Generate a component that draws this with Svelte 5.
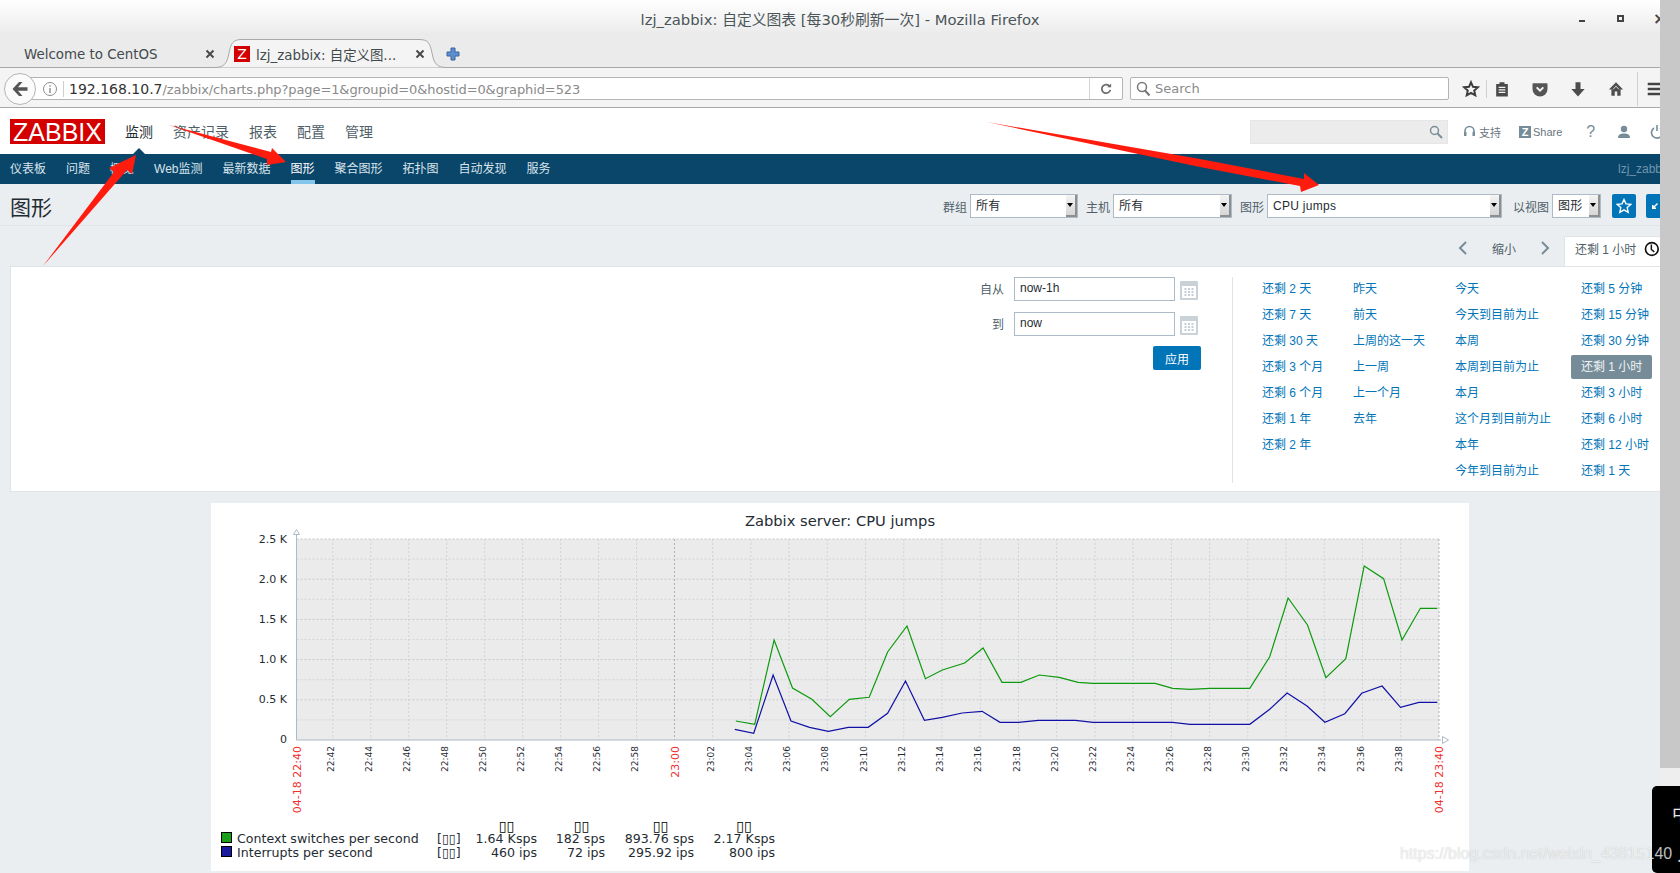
<script>
	const topNav = ['监测', '资产记录', '报表', '配置', '管理']
	const subNav = ['仪表板', '问题', '概览', 'Web监测', '最新数据', '图形', '聚合图形', '拓扑图', '自动发现', '服务']

	const quick = [
		{ w: 91, items: ['还剩 2 天', '还剩 7 天', '还剩 30 天', '还剩 3 个月', '还剩 6 个月', '还剩 1 年', '还剩 2 年'] },
		{ w: 102, items: ['昨天', '前天', '上周的这一天', '上一周', '上一个月', '去年'] },
		{ w: 126, items: ['今天', '今天到目前为止', '本周', '本周到目前为止', '本月', '这个月到目前为止', '本年', '今年到目前为止'] },
		{ w: 81, items: ['还剩 5 分钟', '还剩 15 分钟', '还剩 30 分钟', '还剩 1 小时', '还剩 3 小时', '还剩 6 小时', '还剩 12 小时', '还剩 1 天'] }
	]

	// chart geometry, in page pixels
	const left = 296.5
	const right = 1439
	const top = 539
	const bottom = 740

	// the grid is not quite even in the reference: first slot is short, then 22:42-23:00 and 23:02-23:40 differ a little
	const tickX = (i) => {
		if (i === 0) return left
		if (i <= 10) return 332.8 + (i - 1) * 37.97
		return 712.6 + (i - 11) * 38.23
	}

	const ticks = Array.from({ length: 31 }, (_, i) => {
		const total = 22 * 60 + 40 + i * 2
		const hh = Math.floor(total / 60)
		const mm = String(total % 60).padStart(2, '0')
		const time = hh + ':' + mm
		const edge = i === 0 || i === 30
		return {
			x: tickX(i),
			label: edge ? '04-18 ' + time : time,
			red: edge || i === 10
		}
	})
	const hLines = Array.from({ length: 10 }, (_, i) => ({ y: top + i * 20.1, major: i % 2 === 0 }))
	const yLabels = ['2.5 K', '2.0 K', '1.5 K', '1.0 K', '0.5 K', '0']

	const green = [[72,663],[110,673],[149,420],[186,564],[225,598],[262,650],[300,598],[340,592],[377,456],[416,378],[453,536],[487,510],[532,489],[569,444],[607,547],[645,547],[682,525],[722,532],[760,547],[790,550],[915,550],[950,565],[985,568],[1025,565],[1105,565],[1145,470],[1182,294],[1221,375],[1258,533],[1298,476],[1335,198],[1374,236],[1411,420],[1448,325],[1482,325]]
	const blue = [[70,688],[108,700],[147,525],[183,663],[220,682],[258,694],[298,682],[338,682],[377,640],[413,543],[451,661],[487,652],[527,639],[567,634],[603,667],[640,667],[680,661],[755,661],[790,667],[950,667],[985,673],[1105,673],[1145,628],[1180,579],[1220,618],[1256,667],[1296,641],[1330,580],[1371,558],[1408,622],[1445,607],[1482,607]]
	const toLine = (pts) => pts.map(([x, y]) => (700 + x / 2.01).toFixed(1) + ',' + (500 + y / 3).toFixed(1)).join(' ')

	const legend = [
		{ name: 'Context switches per second', color: '#1a9f1a', y: 843, vals: ['1.64 Ksps', '182 sps', '893.76 sps', '2.17 Ksps'] },
		{ name: 'Interrupts per second', color: '#1a1a9f', y: 857, vals: ['460 ips', '72 ips', '295.92 ips', '800 ips'] }
	]
	const valX = [537, 605, 694, 775]
	const headX = [506.5, 581.5, 660.5, 744]
</script>

<div class="screen">
	<div class="main">
		<div class="titlebar">
			<span class="title">lzj_zabbix: 自定义图表 [每30秒刷新一次] - Mozilla Firefox</span>
			<span class="win min"></span>
			<span class="win max"></span>
			<span class="win close">×</span>
		</div>

		<div class="tabstrip">
			<div class="tab">
				<span class="tab-text">Welcome to CentOS</span>
				<svg class="tab-x" width="10" height="10" viewBox="0 0 10 10"><path d="M1.500 1.500l7 7M8.500 1.500l-7 7" stroke="#4a4a4a" stroke-width="2"/></svg>
			</div>
			<div class="tab active">
				<svg class="tab-shape" width="233" height="29" viewBox="0 0 233 29"><path d="M0 28.500C10 28.500 13 25 15 14 17 4 19 .5 28 .5H205C214 .5 216 4 218 14 220 25 223 28.500 233 28.500" fill="#f4f4f4" stroke="#a8a8a8"/></svg>
				<span class="favicon">Z</span>
				<span class="tab-text">lzj_zabbix: 自定义图...</span>
				<svg class="tab-x" width="10" height="10" viewBox="0 0 10 10"><path d="M1.500 1.500l7 7M8.500 1.500l-7 7" stroke="#4a4a4a" stroke-width="2"/></svg>
			</div>
			<svg class="plus" width="14" height="14" viewBox="0 0 14 14"><path d="M5 1h4v4h4v4H9v4H5V9H1V5h4z" fill="#5b8fd0" stroke="#3c659c"/></svg>
		</div>

		<div class="toolbar">
			<div class="back">
				<svg width="18" height="16" viewBox="0 0 18 16"><path d="M8 1L1.500 8 8 15h3.500L7 9.800h9.500V6.200H7L11.500 1z" fill="#555"/></svg>
			</div>
			<div class="urlbar">
				<svg class="info" width="16" height="16" viewBox="0 0 16 16"><circle cx="8" cy="8" r="6.500" fill="none" stroke="#8c8c8c"/><path d="M8 7v5M8 4.200v1.600" stroke="#8c8c8c" stroke-width="1.400"/></svg>
				<span class="url"><b>192.168.10.7</b>/zabbix/charts.php?page=1&amp;groupid=0&amp;hostid=0&amp;graphid=523</span>
				<span class="reload">
					<svg width="12" height="12" viewBox="0 0 14 14"><path d="M11.500 4.500A5 5 0 1 0 12 8" fill="none" stroke="#6a6a6a" stroke-width="2"/><path d="M8.500 5h4.500V.5z" fill="#6a6a6a"/></svg>
				</span>
			</div>
			<div class="searchbar">
				<svg width="15" height="16" viewBox="0 0 15 16"><circle cx="6" cy="6" r="4.500" fill="none" stroke="#777" stroke-width="1.500"/><path d="M9 9.500l4.500 5" stroke="#777" stroke-width="2"/></svg>
				<span>Search</span>
			</div>
			<svg class="ic star" width="20" height="20" viewBox="-2 -2 24 24"><path d="M10 2l2.400 5.400 5.800.6-4.300 3.900 1.200 5.700L10 14.700l-5.100 2.900 1.200-5.700L1.800 8l5.800-.6z" fill="none" stroke="#3c3c3c" stroke-width="2.400"/></svg>
			<span class="tb-sep"></span>
			<svg class="ic clip" width="20" height="20" viewBox="-2 -2 24 24"><path d="M3 4h4V2h6v2h4v15H3z" fill="#4a4a4a"/><path d="M6 8h8M6 11h8M6 14h8" stroke="#f4f4f4" stroke-width="1.400"/></svg>
			<svg class="ic" width="20" height="20" viewBox="-2 -2 24 24"><path d="M2 3h16a1 1 0 0 1 1 1v6a9 9 0 0 1-18 0V4a1 1 0 0 1 1-1z" fill="#555"/><path d="M6 8l4 4 4-4" fill="none" stroke="#f4f4f4" stroke-width="2.400"/></svg>
			<svg class="ic" width="20" height="20" viewBox="-2 -2 24 24"><path d="M7 2h6v8h5l-8 9-8-9h5z" fill="#4d4d4d"/></svg>
			<svg class="ic" width="20" height="20" viewBox="-2 -2 24 24"><path d="M10 2L1.500 10.500h3V18h4v-5h3v5h4v-7.500h3z" fill="#4d4d4d"/><path d="M6.500 10.500L10 6.500l3.500 4" fill="none" stroke="#f4f4f4"/></svg>
			<span class="tb-sep wide"></span>
			<svg class="ic menu" width="20" height="20" viewBox="-1 -1 22 22"><path d="M2 4.500h16M2 10h16M2 15.500h16" stroke="#444" stroke-width="2.600"/></svg>
		</div>

		<header class="zbx-top">
			<div class="logo">ZABBIX</div>
			<nav class="top-nav">
				{#each topNav as item, i}
					<span class:on={i === 0}>{item}</span>
				{/each}
			</nav>
			<div class="top-tools">
				<div class="top-search">
					<svg width="14" height="14" viewBox="0 0 14 14"><circle cx="5.500" cy="5.500" r="4" fill="none" stroke="#7b8d99" stroke-width="1.500"/><path d="M8.500 8.500l4.500 4.500" stroke="#7b8d99" stroke-width="2"/></svg>
				</div>
				<span class="tool support">
					<svg width="13" height="14" viewBox="0 0 13 14"><path d="M2 9V6a4.500 4.500 0 0 1 9 0v3" fill="none" stroke="#768d99" stroke-width="1.600"/><rect x="1" y="7" width="2.500" height="4" fill="#768d99"/><rect x="9.500" y="7" width="2.500" height="4" fill="#768d99"/></svg>
					支持
				</span>
				<span class="tool share"><i>Z</i>Share</span>
				<span class="tool help">?</span>
				<svg class="tool person" width="14" height="14" viewBox="0 0 14 14"><circle cx="7" cy="4" r="3.200" fill="#768d99"/><path d="M1 13c0-3.500 2.500-4.500 6-4.500s6 1 6 4.500z" fill="#768d99"/></svg>
				<svg class="tool power" width="14" height="14" viewBox="0 0 14 14"><path d="M4 3a5.500 5.500 0 1 0 6 0" fill="none" stroke="#768d99" stroke-width="1.600"/><path d="M7 0v6" stroke="#768d99" stroke-width="1.600"/></svg>
			</div>
		</header>

		<nav class="sub-nav">
			{#each subNav as item}
				<span class:on={item === '图形'}>{item}</span>
			{/each}
			<span class="user">lzj_zabb</span>
		</nav>

		<div class="page">
			<div class="head">
				<h1>图形</h1>
				<div class="filters">
					<label>群组</label><div class="sel w108">所有<i></i></div>
					<label class="tight">主机</label><div class="sel w119">所有<i></i></div>
					<label class="tight">图形</label><div class="sel w235">CPU jumps<i></i></div>
					<label>以视图</label><div class="sel w49">图形<i></i></div>
					<button class="icon-btn">
						<svg width="16" height="16" viewBox="0 0 16 16"><path d="M8 1.500l2 4.400 4.700.5-3.500 3.200 1 4.700L8 11.900 3.800 14.300l1-4.700L1.300 6.400 6 5.900z" fill="none" stroke="#fff" stroke-width="1.400"/></svg>
					</button>
					<button class="icon-btn last">
						<svg width="8" height="8" viewBox="0 0 8 8"><path d="M1 7V3h1.500v1.500L6 1l1 1-3.500 3.500H5V7z" fill="#fff"/></svg>
					</button>
				</div>
			</div>

			<div class="time-bar">
				<svg width="10" height="16" viewBox="0 0 10 16"><path d="M8 2L2 8l6 6" fill="none" stroke="#768d99" stroke-width="2"/></svg>
				<span class="zoom-out">缩小</span>
				<svg width="10" height="16" viewBox="0 0 10 16"><path d="M2 2l6 6-6 6" fill="none" stroke="#768d99" stroke-width="2"/></svg>
				<div class="time-tab">
					还剩 1 小时
					<svg width="16" height="16" viewBox="0 0 16 16"><circle cx="8" cy="8" r="6.500" fill="none" stroke="#111" stroke-width="1.700"/><path d="M7.500 3.500V8.500l3 2.500" fill="none" stroke="#111" stroke-width="1.500"/></svg>
				</div>
			</div>

			<section class="panel">
				<div class="range-form">
					<div class="row">
						<span>自从</span><div class="txt">now-1h</div>
						<svg width="18" height="19" viewBox="0 0 18 19"><rect width="18" height="19" rx="1" fill="#c9d2d8"/><rect x="2" y="5" width="14" height="12" fill="#fff"/><path d="M4.500 8h2M8 8h2M11.500 8h2M4.500 11h2M8 11h2M11.500 11h2M4.500 14h2M8 14h2M11.500 14h2" stroke="#b2bec6" stroke-width="1.500"/></svg>
					</div>
					<div class="row">
						<span>到</span><div class="txt">now</div>
						<svg width="18" height="19" viewBox="0 0 18 19"><rect width="18" height="19" rx="1" fill="#c9d2d8"/><rect x="2" y="5" width="14" height="12" fill="#fff"/><path d="M4.500 8h2M8 8h2M11.500 8h2M4.500 11h2M8 11h2M11.500 11h2M4.500 14h2M8 14h2M11.500 14h2" stroke="#b2bec6" stroke-width="1.500"/></svg>
					</div>
					<button class="apply">应用</button>
				</div>
				<div class="quick">
					{#each quick as col}
						<div class="quick-col" style="width:{col.w}px">
							{#each col.items as item}
								<span class:sel-range={item === '还剩 1 小时'}>{item}</span>
							{/each}
						</div>
					{/each}
				</div>
			</section>

			<div class="graph">
				<svg width="1258" height="368" viewBox="211 503 1258 368">
					<rect x={left} y={top} width={right - left} height={bottom - top} fill="#ebebeb"/>
					{#each hLines as l}
						<line x1={left} x2={right} y1={l.y} y2={l.y} stroke={l.major ? '#c4c9cc' : '#d2d6d8'} stroke-dasharray="2 2"/>
					{/each}
					{#each ticks as t}
						<line x1={t.x} x2={t.x} y1={top} y2={bottom} stroke={t.red ? '#a9b1b6' : '#cdd4d8'} stroke-dasharray="2 2"/>
						<text
							class:tick={!t.red}
							class:tick-red={t.red}
							text-anchor="end"
							transform="translate({t.x + (t.red ? 4 : 1.2)} 746) rotate(-90)">{t.label}</text>
					{/each}
					<polyline points={toLine(green)} fill="none" stroke="#0d9a0d" stroke-width="1.200"/>
					<polyline points={toLine(blue)} fill="none" stroke="#1010a6" stroke-width="1.200"/>

					<line x1={left} x2={left} y1="535" y2={bottom} stroke="#acbbc7"/>
					<line x1={left} x2="1441" y1={bottom} y2={bottom} stroke="#acbbc7" stroke-width="1.200"/>
					<path d="M296.500 529.500l3 5h-6z" fill="#fff" stroke="#acbbc7"/>
					<path d="M1448.500 740l-6-3.500v7z" fill="#fff" stroke="#acbbc7"/>

					{#each yLabels as label, i}
						<text class="ylabel" x="287" y={543 + i * 40} text-anchor="end">{label}</text>
					{/each}

					<text class="gtitle" x="840" y="526" text-anchor="middle">Zabbix server: CPU jumps</text>

					{#each headX as x}
						<text class="legend-head" {x} y="831" text-anchor="middle">▯▯</text>
					{/each}
					{#each legend as row}
						<rect x="221.500" y={row.y - 10.500} width="10" height="10" fill={row.color} stroke="#000"/>
						<text class="legend" x="237" y={row.y}>{row.name}</text>
						<text class="legend" x="437" y={row.y}>[▯▯]</text>
						{#each row.vals as v, i}
							<text class="legend" x={valX[i]} y={row.y} text-anchor="end">{v}</text>
						{/each}
					{/each}
				</svg>
			</div>
		</div>
	</div>

	<div class="scrollbar"><div class="thumb"></div></div>

	<!-- hand-drawn red arrows on top of the screenshot -->
	<svg class="arrows" width="1680" height="873" viewBox="0 0 1680 873">
		<path d="M43 266L114 172 109 168 136 155 132 174 127 170z" fill="#ff1c0e"/>
		<path d="M169 125L271 152 272 148 286 162 267 165 267 159z" fill="#ff1c0e"/>
		<path d="M987 122L1200 159 1304 179 1304 173 1319 185 1301 192 1300 186 1200 167z" fill="#ff1c0e"/>
	</svg>

	<div class="ime"><span>中</span><span class="second">丿</span></div>
	<div class="watermark">https://blog.csdn.net/weixin_43815140</div>
</div>

<style>
	:global(body) {
		margin: 0;
		background: #ebeef1;
	}

	.screen {
		position: relative;
		display: flex;
		width: 1680px;
		height: 873px;
		overflow: hidden;
		font-family: "Liberation Sans", "Noto Sans CJK SC", sans-serif;
		font-size: 12px;
		color: #1f2c33;
	}

	.main {
		width: 1660px;
		overflow: hidden;
		display: flex;
		flex-direction: column;
	}

	/* firefox chrome */
	.titlebar {
		position: relative;
		flex: none;
		height: 34px;
		box-sizing: border-box;
		padding: 2px 0 0 20px;
		display: flex;
		align-items: center;
		justify-content: center;
		background: linear-gradient(#fff, #ebebeb);
		font-family: "DejaVu Sans", "Noto Sans CJK SC", sans-serif;
		font-size: 14.800px;
		color: #4b5559;
	}

	.win {
		position: absolute;
		background: #444;
	}

	.win.min {
		left: 1579px;
		top: 20px;
		width: 6px;
		height: 2px;
	}

	.win.max {
		left: 1617px;
		top: 15px;
		width: 3px;
		height: 3px;
		background: none;
		border: 2px solid #444;
	}

	.win.close {
		left: 1653px;
		top: 9px;
		background: none;
		font-size: 16px;
		font-weight: bold;
		color: #444;
	}

	.tabstrip {
		position: relative;
		z-index: 1;
		flex: none;
		height: 33px;
		display: flex;
		background: #ebebeb;
		font-family: "DejaVu Sans", "Noto Sans CJK SC", sans-serif;
		font-size: 13.400px;
		color: #424a4d;
	}

	.tab {
		position: relative;
		width: 222px;
		box-sizing: border-box;
		padding: 7px 0 0 24px;
		display: flex;
		align-items: center;
	}

	.tab-x {
		position: absolute;
		right: 7px;
		top: 15px;
	}

	.tab.active {
		width: 217px;
		padding-left: 12px;
	}

	.tab.active .tab-x {
		right: 14px;
	}

	.tab-shape {
		position: absolute;
		left: -8px;
		top: 5px;
	}

	.tab-text {
		position: relative;
	}

	.favicon {
		position: relative;
		width: 16px;
		height: 16px;
		margin-right: 6px;
		background: #d40000;
		color: #fff;
		font-size: 14px;
		line-height: 16px;
		text-align: center;
	}

	.plus {
		position: relative;
		margin: 13px 0 0 7px;
	}

	.toolbar {
		flex: none;
		height: 41px;
		box-sizing: border-box;
		padding-top: 2px;
		display: flex;
		align-items: center;
		background: #f4f4f4;
		border-top: 1px solid #a8a8a8;
		border-bottom: 1px solid #a8a8a8;
	}

	.back {
		position: relative;
		z-index: 1;
		flex: none;
		width: 30px;
		height: 30px;
		margin-left: 4px;
		display: flex;
		align-items: center;
		justify-content: center;
		background: #fbfbfb;
		border: 1px solid #b4b4b4;
		border-radius: 50%;
	}

	.urlbar {
		flex: none;
		width: 1103px;
		height: 23px;
		box-sizing: border-box;
		margin-left: -16px;
		display: flex;
		align-items: center;
		background: #fff;
		border: 1px solid #b4b4b4;
		border-radius: 2px;
		font-family: "DejaVu Sans", sans-serif;
		font-size: 13px;
		letter-spacing: -0.1px;
		color: #8a8a8a;
	}

	.info {
		margin-left: 21px;
		padding-right: 5px;
		border-right: 1px solid #cfcfcf;
	}

	.url {
		margin-left: 5px;
	}

	.url b {
		font-weight: normal;
		font-size: 14px;
		letter-spacing: 0;
		color: #333;
	}

	.reload {
		margin-left: auto;
		width: 33px;
		height: 100%;
		box-sizing: border-box;
		display: flex;
		align-items: center;
		justify-content: center;
		border-left: 1px solid #d4d4d4;
	}

	.searchbar {
		flex: none;
		width: 319px;
		height: 23px;
		box-sizing: border-box;
		margin-left: 7px;
		padding-left: 5px;
		display: flex;
		align-items: center;
		gap: 4px;
		background: #fff;
		border: 1px solid #b4b4b4;
		border-radius: 2px;
		font-family: "DejaVu Sans", sans-serif;
		font-size: 13px;
		color: #8a8a8a;
	}

	.ic {
		flex: none;
		margin-left: 18px;
	}

	.ic.star {
		margin-left: 12px;
	}

	.ic.clip {
		margin-left: 5px;
	}

	.ic.menu {
		margin-left: 7px;
	}

	.tb-sep {
		flex: none;
		width: 1px;
		height: 18px;
		margin-left: 5px;
		background: #d0d0d0;
	}

	.tb-sep.wide {
		height: 34px;
		margin-left: 11px;
	}

	/* zabbix header */
	.zbx-top {
		flex: none;
		height: 46px;
		display: flex;
		align-items: center;
		background: #fff;
	}

	.logo {
		width: 95px;
		height: 25px;
		margin-left: 10px;
		background: #d40000;
		color: #fff;
		font-size: 25px;
		line-height: 26px;
		text-align: center;
	}

	.top-nav {
		position: relative;
		display: flex;
		margin-left: 10px;
		font-size: 14px;
		color: #4f5f69;
	}

	.top-nav span {
		position: relative;
		padding: 0 10px;
	}

	.top-nav span.on {
		color: #1f2c33;
	}

	.top-nav span.on::after {
		content: "";
		position: absolute;
		left: 50%;
		bottom: -14px;
		margin-left: -7px;
		border: 7px solid transparent;
		border-top: 0;
		border-bottom-color: #0a466a;
	}

	.top-tools {
		flex: none;
		width: 410px;
		margin-left: auto;
		padding-top: 2px;
		display: flex;
		align-items: center;
		color: #68757e;
		font-size: 11px;
	}

	.top-search {
		flex: none;
		width: 198px;
		height: 24px;
		box-sizing: border-box;
		padding-right: 4px;
		display: flex;
		align-items: center;
		justify-content: flex-end;
		background: #ececec;
		border: 1px solid #e6e6e6;
	}

	.tool {
		flex: none;
	}

	.support {
		margin-left: 15px;
		display: flex;
		align-items: center;
		gap: 3px;
	}

	.share {
		margin-left: 18px;
		display: flex;
		align-items: center;
		gap: 2px;
	}

	.share i {
		width: 12px;
		height: 12px;
		background: #768d99;
		color: #fff;
		font-style: normal;
		font-weight: bold;
		font-size: 11px;
		line-height: 12px;
		text-align: center;
	}

	.help {
		margin-left: 24px;
		font-size: 16px;
		color: #768d99;
	}

	.person {
		margin-left: 22px;
	}

	.power {
		margin-left: 19px;
	}

	.sub-nav {
		flex: none;
		height: 30px;
		display: flex;
		align-items: stretch;
		background: #0a466a;
		color: #d9e4ea;
	}

	.sub-nav span {
		margin: 0 10px;
		line-height: 30px;
	}

	.sub-nav span.on {
		color: #fff;
		border-bottom: 4px solid #84c5ee;
		box-sizing: border-box;
	}

	.sub-nav .user {
		margin: 0 -2px 0 auto;
		color: #6f95ad;
	}

	/* page */
	.page {
		flex: 1;
		min-height: 0;
		background: #ebeef1;
	}

	.head {
		height: 42px;
		box-sizing: border-box;
		display: flex;
		align-items: flex-start;
		justify-content: space-between;
		border-bottom: 1px solid #dfe4e7;
	}

	h1 {
		margin: 9px 0 0 10px;
		font-size: 21px;
		font-weight: normal;
		line-height: 30px;
		color: #1f2c33;
	}

	.filters {
		display: flex;
		align-items: center;
		height: 24px;
		margin: 10px -10px 0 0;
	}

	.filters label {
		margin: 0 3px 0 11px;
		color: #4f5f69;
	}

	.filters label.tight {
		margin-left: 8px;
	}

	.sel {
		position: relative;
		flex: none;
		height: 24px;
		box-sizing: border-box;
		padding-left: 5px;
		background: #fff;
		border: 1px solid #acbbc7;
		line-height: 23px;
		letter-spacing: 0.3px;
		color: #1f2c33;
	}

	.sel i {
		position: absolute;
		right: 0;
		top: 0;
		bottom: 0;
		width: 11px;
		background: linear-gradient(#f4f4f4, #d6d6d6);
		border-right: 2px solid #8f8f8f;
		border-bottom: 2px solid #8f8f8f;
		box-sizing: border-box;
	}

	.sel i::after {
		content: "";
		position: absolute;
		left: 1px;
		top: 8px;
		border: 3.500px solid transparent;
		border-top: 4px solid #000;
		border-bottom: 0;
	}

	.w108 { width: 108px; }
	.w119 { width: 119px; }
	.w235 { width: 235px; }
	.w49 { width: 49px; }

	.icon-btn {
		flex: none;
		width: 24px;
		height: 24px;
		margin-left: 11px;
		padding: 0;
		display: flex;
		align-items: center;
		justify-content: center;
		background: #0275b8;
		border: 0;
		border-radius: 2px;
	}

	.icon-btn.last {
		margin-left: 10px;
		justify-content: flex-start;
		padding-left: 5px;
	}

	.time-bar {
		height: 40px;
		box-sizing: border-box;
		padding-top: 4px;
		display: flex;
		align-items: center;
		justify-content: flex-end;
		color: #4f5f69;
	}

	.zoom-out {
		margin: 0 24px 0 24px;
	}

	.time-tab {
		width: 96px;
		height: 30px;
		box-sizing: border-box;
		margin: 6px 0 0 14px;
		padding: 0 0 6px 10px;
		display: flex;
		align-items: center;
		gap: 8px;
		flex: none;
		background: #fff;
		border: 1px solid #dfe4e7;
		border-width: 1px 0 0 1px;
		white-space: nowrap;
	}

	.panel {
		height: 226px;
		box-sizing: border-box;
		margin-left: 10px;
		padding: 10px 8px 0 0;
		display: flex;
		justify-content: flex-end;
		background: #fff;
		border: 1px solid #dfe4e7;
		border-width: 1px 0 1px 1px;
	}

	.range-form {
		display: flex;
		flex-direction: column;
		align-items: flex-end;
		gap: 11px;
		margin-right: 31px;
	}

	.row {
		display: flex;
		align-items: center;
		margin-right: 3px;
	}

	.row span {
		margin: 0 10px 2px 0;
		color: #4f5f69;
	}

	.row svg {
		margin-left: 5px;
		margin-top: 2px;
	}

	.txt {
		width: 161px;
		height: 24px;
		box-sizing: border-box;
		padding-left: 5px;
		border: 1px solid #acbbc7;
		line-height: 21px;
	}

	.apply {
		width: 48px;
		height: 24px;
		margin-top: -1px;
		padding: 0;
		background: #0275b8;
		border: 0;
		border-radius: 2px;
		color: #fff;
		font: inherit;
	}

	.quick {
		height: 206px;
		display: flex;
		padding-left: 19px;
		border-left: 1px solid #dfe4e7;
	}

	.quick-col {
		display: flex;
		flex-direction: column;
		gap: 2px;
		align-items: flex-start;
	}

	.quick-col span {
		height: 24px;
		padding: 0 10px;
		line-height: 24px;
		color: #0275b8;
		white-space: nowrap;
		box-sizing: border-box;
	}

	.quick-col span.sel-range {
		width: 81px;
		background: #768d99;
		border-radius: 2px;
		color: #f0f2f4;
	}

	.graph {
		width: 1258px;
		height: 368px;
		margin: 11px 0 0 211px;
		background: #fff;
	}

	.graph svg {
		display: block;
		font-family: "DejaVu Sans", sans-serif;
	}

	.tick {
		font-size: 9px;
		fill: #1f2c33;
	}

	.tick-red {
		font-size: 11px;
		fill: #f03030;
	}

	.ylabel {
		font-size: 11px;
		fill: #1f2c33;
	}

	.gtitle {
		font-size: 14.700px;
		fill: #1f2c33;
	}

	.legend {
		font-size: 12.600px;
		fill: #1f2c33;
	}

	.legend-head {
		font-size: 14px;
		fill: #000;
	}

	.scrollbar {
		width: 20px;
		background: #eeeeee;
	}

	.thumb {
		height: 768px;
		background: #c8c8c8;
	}

	.arrows {
		position: absolute;
		left: 0;
		top: 0;
		pointer-events: none;
	}

	.ime {
		position: absolute;
		left: 1652px;
		top: 786px;
		width: 28px;
		height: 87px;
		overflow: hidden;
		background: #000;
		border-radius: 5px 0 0 5px;
		color: #e8e8e8;
		font-size: 18px;
	}

	.ime span {
		position: absolute;
		left: 20px;
		top: 14px;
	}

	.ime .second {
		left: 22px;
		top: 54px;
	}

	.watermark {
		position: absolute;
		left: 1400px;
		top: 844px;
		font-size: 16px;
		line-height: 20px;
		white-space: nowrap;
		color: rgba(255, 255, 255, 0.75);
		text-shadow: 0 0 1px rgba(0, 0, 0, 0.25);
	}
</style>
